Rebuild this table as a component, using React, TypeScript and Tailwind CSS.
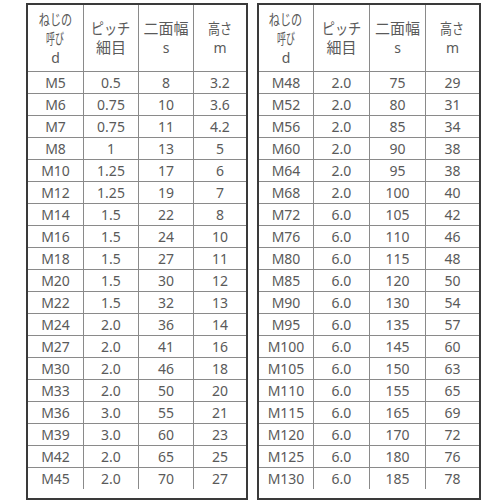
const LEFT = [
  ["M5", "0.5", "8", "3.2"],
  ["M6", "0.75", "10", "3.6"],
  ["M7", "0.75", "11", "4.2"],
  ["M8", "1", "13", "5"],
  ["M10", "1.25", "17", "6"],
  ["M12", "1.25", "19", "7"],
  ["M14", "1.5", "22", "8"],
  ["M16", "1.5", "24", "10"],
  ["M18", "1.5", "27", "11"],
  ["M20", "1.5", "30", "12"],
  ["M22", "1.5", "32", "13"],
  ["M24", "2.0", "36", "14"],
  ["M27", "2.0", "41", "16"],
  ["M30", "2.0", "46", "18"],
  ["M33", "2.0", "50", "20"],
  ["M36", "3.0", "55", "21"],
  ["M39", "3.0", "60", "23"],
  ["M42", "2.0", "65", "25"],
  ["M45", "2.0", "70", "27"],
];

const RIGHT = [
  ["M48", "2.0", "75", "29"],
  ["M52", "2.0", "80", "31"],
  ["M56", "2.0", "85", "34"],
  ["M60", "2.0", "90", "38"],
  ["M64", "2.0", "95", "38"],
  ["M68", "2.0", "100", "40"],
  ["M72", "6.0", "105", "42"],
  ["M76", "6.0", "110", "46"],
  ["M80", "6.0", "115", "48"],
  ["M85", "6.0", "120", "50"],
  ["M90", "6.0", "130", "54"],
  ["M95", "6.0", "135", "57"],
  ["M100", "6.0", "145", "60"],
  ["M105", "6.0", "150", "63"],
  ["M110", "6.0", "155", "65"],
  ["M115", "6.0", "165", "69"],
  ["M120", "6.0", "170", "72"],
  ["M125", "6.0", "180", "76"],
  ["M130", "6.0", "185", "78"],
];

function SizeTable({ rows, cols, width }: { rows: string[][]; cols: string; width: string }) {
  return (
    <div className={`${width} border-2 border-[#3a3a3a]`}>
      {/* header */}
      <div className={`grid ${cols} h-[66px] text-[15px] leading-[19px]`}>
        <div className="flex flex-col items-center justify-center border-r border-[#8a8a8a]">
          <span className="inline-block scale-x-[0.74]">ねじの</span>
          <span className="inline-block scale-x-[0.6]">呼び</span>
          <span className="text-[14px]">d</span>
        </div>
        <div className="flex flex-col items-center justify-center border-r border-[#8a8a8a]">
          <span className="inline-block scale-x-[0.88]">ピッチ</span>
          <span>細目</span>
        </div>
        <div className="flex flex-col items-center justify-center border-r border-[#8a8a8a]">
          <span>二面幅</span>
          <span className="text-[14px]">s</span>
        </div>
        <div className="flex flex-col items-center justify-center">
          <span className="inline-block scale-x-[0.8]">高さ</span>
          <span className="text-[14px]">m</span>
        </div>
      </div>
      {rows.map((r) => (
        <div key={r[0]} className={`grid ${cols} h-[22px] border-t border-[#8a8a8a] text-[14px] leading-[21px]`}>
          <div className="border-r border-[#8a8a8a] text-center">{r[0]}</div>
          <div className="border-r border-[#8a8a8a] text-center">{r[1]}</div>
          <div className="border-r border-[#8a8a8a] text-center">{r[2]}</div>
          <div className="text-center">{r[3]}</div>
        </div>
      ))}
    </div>
  );
}

export default function App() {
  return (
    <div
      className="flex h-[500px] w-[500px] gap-[9px] bg-white pl-[26px] pt-[3px] text-[#5a5a5a]"
      style={{ fontFamily: '"Noto Sans", "Noto Sans CJK JP", sans-serif' }}
    >
      <SizeTable rows={LEFT} cols="grid-cols-[56px_55px_55px_1fr]" width="w-[222px]" />
      <SizeTable rows={RIGHT} cols="grid-cols-[55px_56px_56px_1fr]" width="w-[224px]" />
    </div>
  );
}
